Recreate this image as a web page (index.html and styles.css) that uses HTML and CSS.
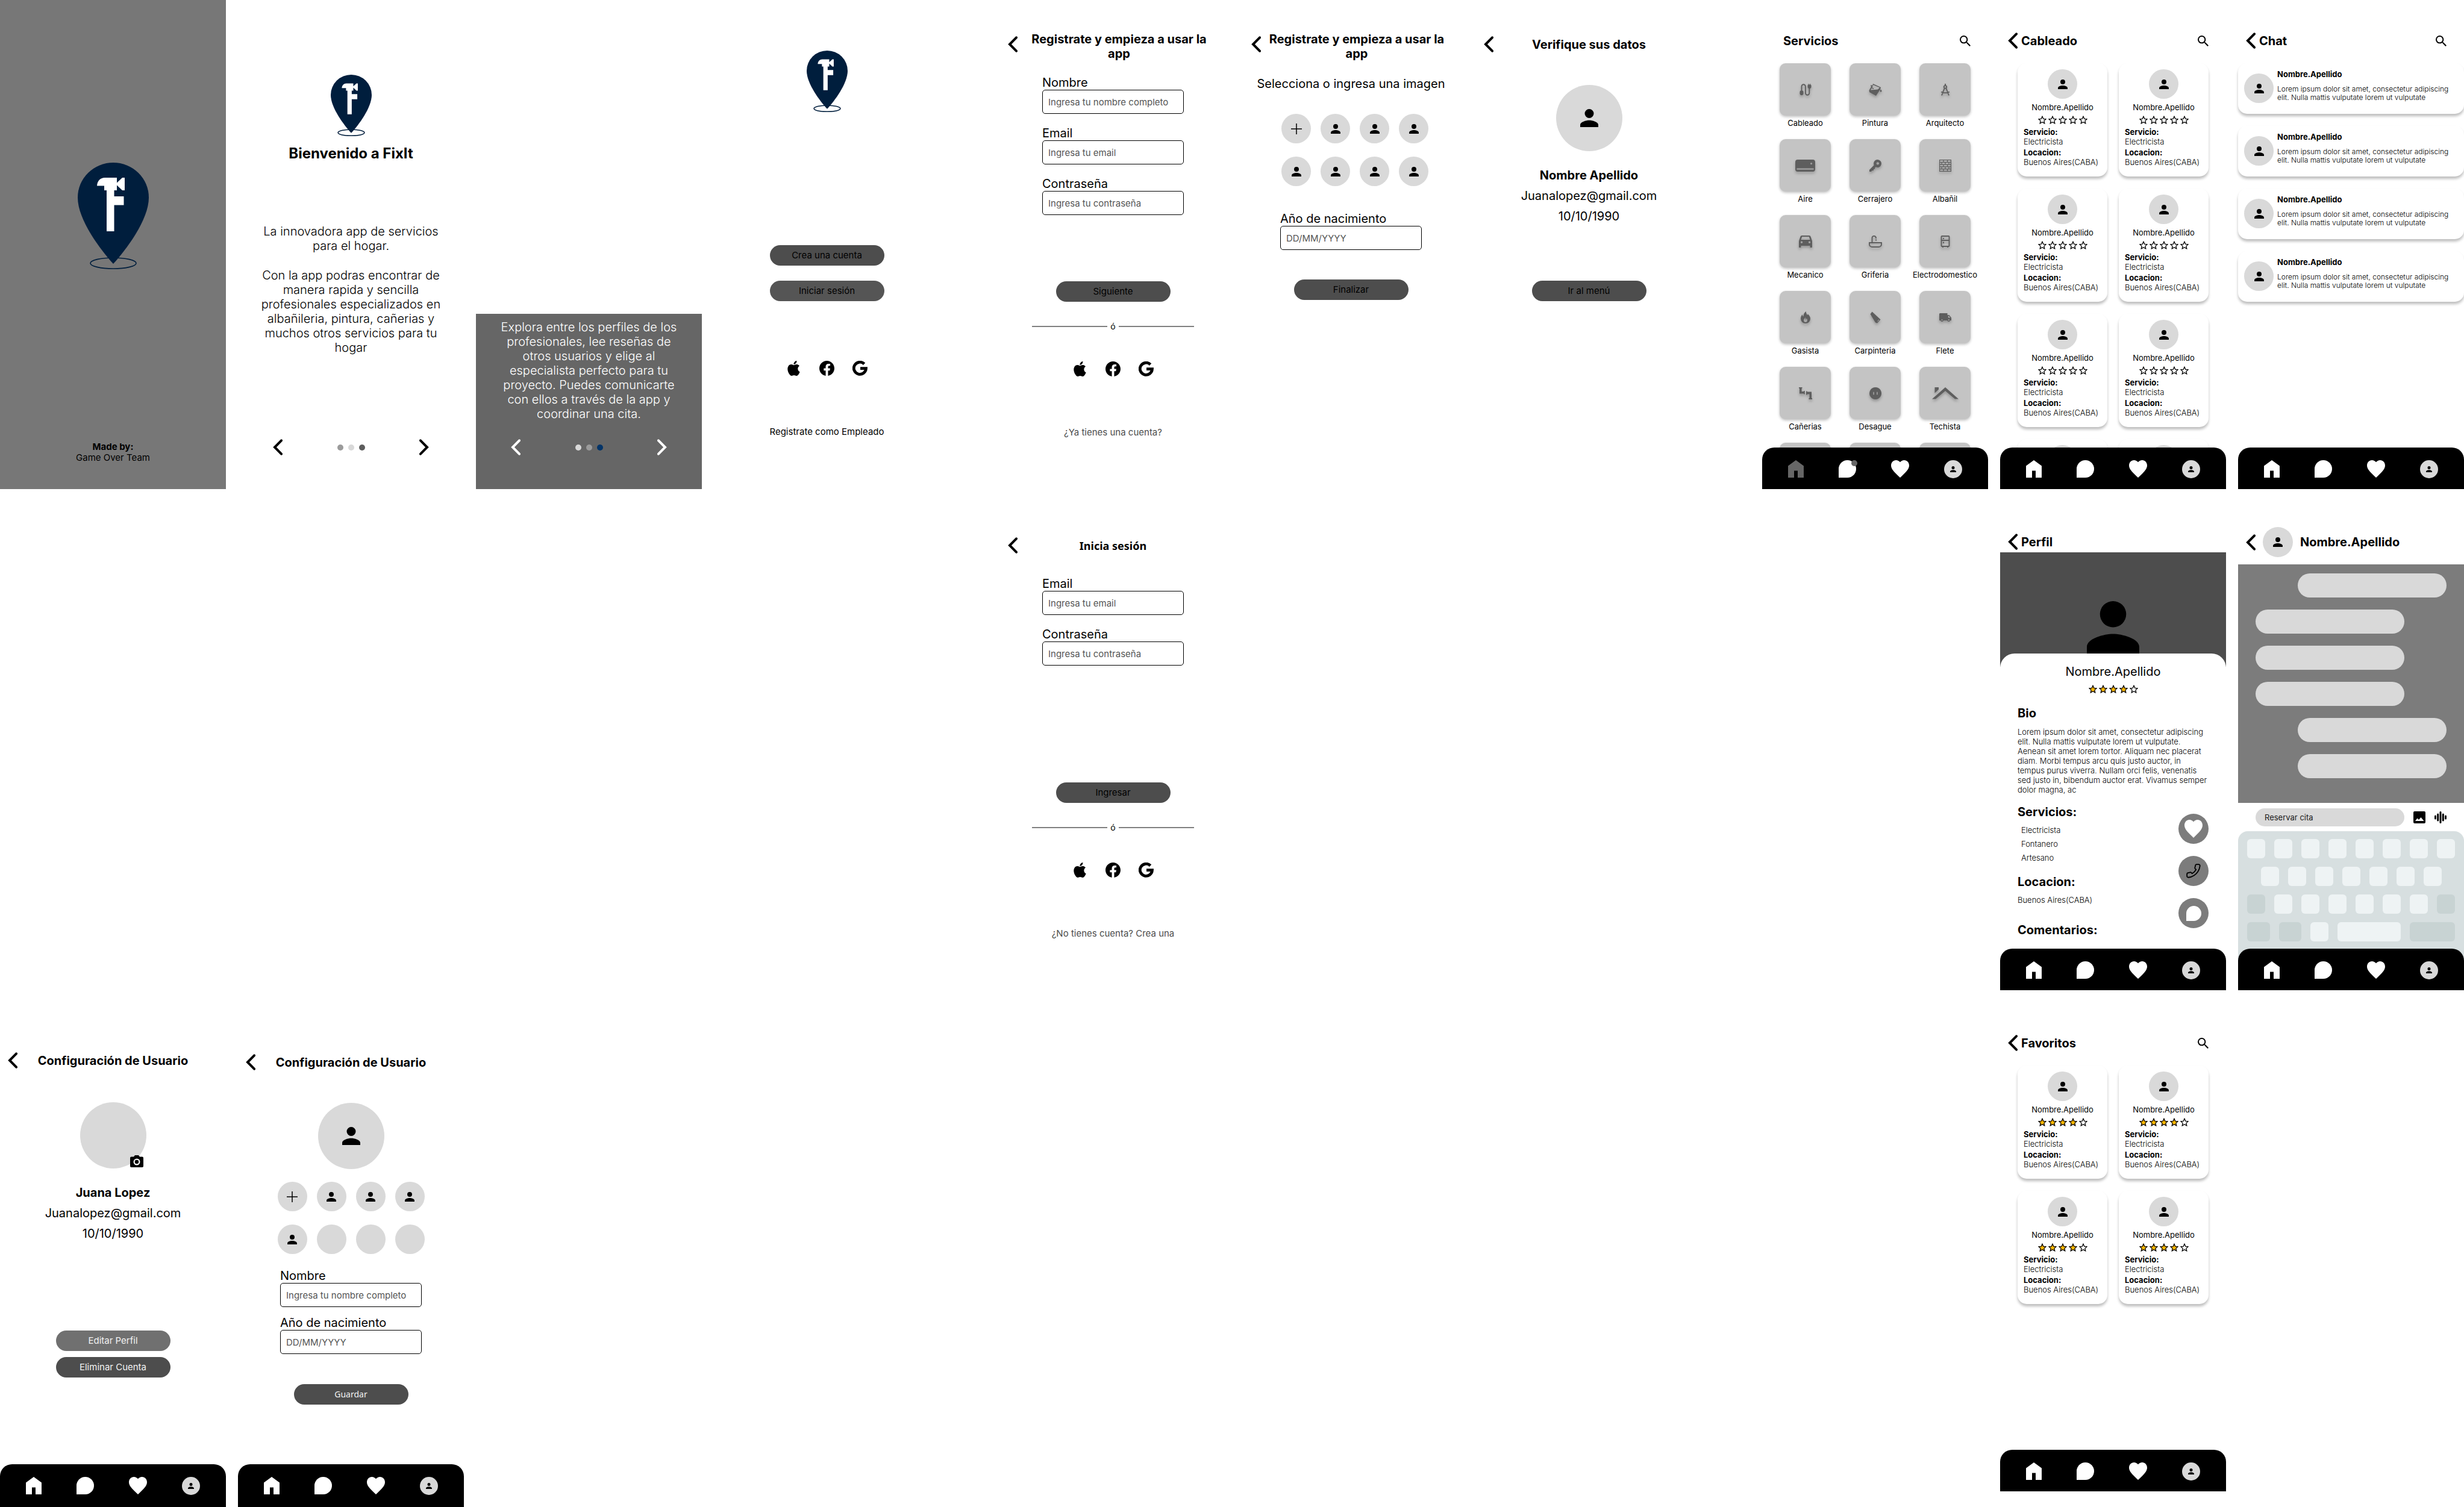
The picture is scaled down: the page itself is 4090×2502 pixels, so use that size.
FILE: index.html
```html
<!DOCTYPE html>
<html lang="es">
<head>
<meta charset="utf-8">
<meta name="viewport" content="width=device-width, initial-scale=1">
<title>FixIt</title>
<link rel="stylesheet" href="styles.css">
</head>
<body>
<svg class="sprite" aria-hidden="true">
  <symbol id="logo" viewBox="0 0 118 177">
    <ellipse cx="59" cy="167" rx="38" ry="9" fill="none" stroke="#001e3d" stroke-width="1.6" vector-effect="non-scaling-stroke"/>
    <path fill="#001e3d" d="M59 168C38 145 0 95 0 58a59 58 0 0 1 118 0c0 37-38 87-59 110z"/>
    <path fill="#fff" d="M32 38.500C32.500 30 38 25 45 25H65V33.500L74 25h4v21h-4l-9-8.500V46h-4.500v10h16v14.500h-16V114H48V46h-4v-7.500z"/>
  </symbol>
  <symbol id="back" viewBox="0 0 16 27"><path d="M14 2.300 3 13.500l11 11.200" fill="none" stroke="currentColor" stroke-width="4" stroke-linecap="round"/></symbol>
  <symbol id="next" viewBox="0 0 16 27"><path d="M2 2.300 13 13.500 2 24.700" fill="none" stroke="currentColor" stroke-width="4" stroke-linecap="round"/></symbol>
  <symbol id="person" viewBox="4 4 16 16"><path d="M12 12a4 4 0 1 0 0-8 4 4 0 0 0 0 8zm0 2c-2.670 0-8 1.340-8 4v2h16v-2c0-2.660-5.330-4-8-4z"/></symbol>
  <symbol id="plus" viewBox="0 0 18 18"><path d="M9 0v18M0 9h18" stroke="#000" stroke-width="1.500"/></symbol>
  <symbol id="star" viewBox="1 1 22 22"><path d="M12 3l2.800 6.300 6.700.7-5 4.600 1.400 6.700L12 17.900l-5.900 3.400 1.400-6.700-5-4.600 6.700-.7z" stroke="#000" stroke-width="2"/></symbol>
  <symbol id="search" viewBox="3 3 17.500 17.500"><path d="M15.500 14h-.790l-.280-.270A6.471 6.471 0 0 0 16 9.500 6.500 6.500 0 1 0 9.500 16c1.610 0 3.090-.590 4.230-1.570l.270.280v.790l5 4.990L20.490 19l-4.990-5zm-6 0C7.010 14 5 11.990 5 9.500S7.010 5 9.500 5 14 7.010 14 9.500 11.990 14 9.500 14z"/></symbol>
  <symbol id="home" viewBox="0 0 26 29"><path fill="currentColor" d="M0 9.500 13 0l13 9.500V29H16V17.500h-6V29H0z"/></symbol>
  <symbol id="bubble" viewBox="0 0 29 29"><path fill="#fff" d="M0 29V14.500a14.500 14.500 0 0 1 29 0A14.500 14.500 0 0 1 14.500 29z"/></symbol>
  <symbol id="heart" viewBox="2 3 20 18.350" preserveAspectRatio="none"><path fill="#fff" d="M12 21.350l-1.450-1.320C5.400 15.360 2 12.280 2 8.500 2 5.420 4.420 3 7.500 3c1.740 0 3.410.810 4.500 2.090C13.090 3.810 14.760 3 16.500 3 19.580 3 22 5.420 22 8.500c0 3.780-3.400 6.860-8.550 11.540L12 21.350z"/></symbol>
  <symbol id="apple" viewBox="0 0 24 24"><path d="M12.152 6.896c-.948 0-2.415-1.078-3.960-1.040-2.040.027-3.910 1.183-4.961 3.014-2.117 3.675-.546 9.103 1.519 12.090 1.013 1.454 2.208 3.090 3.792 3.039 1.520-.065 2.090-.987 3.935-.987 1.831 0 2.350.987 3.960.948 1.637-.026 2.676-1.480 3.676-2.948 1.156-1.688 1.636-3.325 1.662-3.415-.039-.013-3.182-1.221-3.220-4.857-.026-3.040 2.480-4.494 2.597-4.559-1.429-2.090-3.623-2.324-4.390-2.376-2-.156-3.675 1.090-4.610 1.090zM15.530 3.830c.843-1.012 1.400-2.427 1.245-3.830-1.207.052-2.662.805-3.532 1.818-.780.896-1.454 2.338-1.273 3.714 1.338.104 2.715-.688 3.559-1.701"/></symbol>
  <symbol id="facebook" viewBox="0 0 24 24"><path d="M24 12.073c0-6.627-5.373-12-12-12s-12 5.373-12 12c0 5.990 4.388 10.954 10.125 11.854v-8.385H7.078v-3.470h3.047V9.430c0-3.007 1.792-4.669 4.533-4.669 1.312 0 2.686.235 2.686.235v2.953H15.830c-1.491 0-1.956.925-1.956 1.874v2.250h3.328l-.532 3.470h-2.796v8.385C19.612 23.027 24 18.062 24 12.073z"/></symbol>
  <symbol id="google" viewBox="0 0 24 24"><path d="M18.800 5A9.700 9.700 0 1 0 21.600 12.200H12.500" fill="none" stroke="#000" stroke-width="4.600"/></symbol>
  <symbol id="camera" viewBox="0 0 22 20"><path fill-rule="evenodd" d="M2 2.500h4L8 0h6l2 2.500h4a2 2 0 0 1 2 2V18a2 2 0 0 1-2 2H2a2 2 0 0 1-2-2V4.500a2 2 0 0 1 2-2zM11 5.500a5.500 5.500 0 1 0 0 11 5.500 5.500 0 0 0 0-11zm0 2.200a3.300 3.300 0 1 1 0 6.600 3.300 3.300 0 0 1 0-6.600z"/></symbol>
  <symbol id="phone" viewBox="0 0 24 24"><path transform="matrix(-1 0 0 1 24 0)" fill="none" stroke="#000" stroke-width="1.700" stroke-linejoin="round" d="M22 16.920v3a2 2 0 0 1-2.180 2 19.790 19.790 0 0 1-8.630-3.070 19.500 19.500 0 0 1-6-6 19.790 19.790 0 0 1-3.070-8.670A2 2 0 0 1 4.110 2h3a2 2 0 0 1 2 1.720c.127.960.361 1.903.7 2.810a2 2 0 0 1-.450 2.110L8.090 9.910a16 16 0 0 0 6 6l1.270-1.270a2 2 0 0 1 2.110-.450c.907.339 1.850.573 2.810.7A2 2 0 0 1 22 16.920z"/></symbol>
  <symbol id="image" viewBox="0 0 20 20"><path fill-rule="evenodd" d="M2 0h16a2 2 0 0 1 2 2v16a2 2 0 0 1-2 2H2a2 2 0 0 1-2-2V2a2 2 0 0 1 2-2zm1 16h14.500L12.500 10l-3.500 4-2.500-2.500z"/></symbol>
  <symbol id="wave" viewBox="0 0 20 20"><path d="M1.500 8v4M5.700 5v10M10 1.500v17M14.300 5v10M18.500 8v4" stroke="#000" stroke-width="3" stroke-linecap="round"/></symbol>

  <symbol id="s-cable" viewBox="0 0 20 20"><path d="M3.500 13V4.500a3.200 3.200 0 0 1 6.400 0v11a3.200 3.200 0 0 0 6.400 0V7" fill="none" stroke="currentColor" stroke-width="1.900"/><path fill="currentColor" d="M1.500 11.500h4l1 1.500v4l-1.500 2H2l-1.500-2v-4zM14.500 0h1v1.500h1.800V0h1v1.500l1.200 1V6l-1.500 2h-3L13.500 6V2.500l1-1z"/></symbol>
  <symbol id="s-paint" viewBox="0 0 22 20"><path fill="currentColor" fill-rule="evenodd" d="M7 0l13 6-1 3.500L12 20 1 14l-.5-3L4 5 3 3.200 4 2l2 1.200zM7.500 2l-2 4 3 2-.8 1-2.800-1.800L3 10.500l12-1 3-3zM20 9.500c2 2 2 4 0 4s-2-2 0-4z"/></symbol>
  <symbol id="s-compass" viewBox="0 0 20 20"><path fill="none" stroke="currentColor" stroke-width="1.900" d="M10 0v3M10 3a2.300 2.300 0 1 1-.1 0zM8.800 7 4 19.500M11.200 7 16 19.500M3 13.500c4 2 10 2 14 0"/></symbol>
  <symbol id="s-air" viewBox="0 0 33 20"><path fill="currentColor" fill-rule="evenodd" d="M4 0h25a4 4 0 0 1 4 4v12a4 4 0 0 1-4 4H4a4 4 0 0 1-4-4V4a4 4 0 0 1 4-4zm22.500 5a1.600 1.600 0 1 0 .1 0zM3.500 14.200a1 1 0 0 0 0 2.600h26a1 1 0 0 0 0-2.600z"/></symbol>
  <symbol id="s-key" viewBox="0 0 20 20"><path fill="currentColor" fill-rule="evenodd" d="M13.500 0a6.500 6.500 0 1 1-3 12.300L9 14l.5 1.500L7 16v2l-2.500.3L3 20H0v-3l7.700-7.700A6.500 6.500 0 0 1 13.500 0zm.3 4.200a2.200 2.200 0 1 0 .1 0z"/></symbol>
  <symbol id="s-wall" viewBox="0 0 20 20"><path fill="none" stroke="currentColor" stroke-width="1.200" d="M.6.600h18.800v18.800H.6zM.6 4.400h18.800M.6 8.200h18.800M.6 11.900h18.800M.6 15.600h18.800M7 .6v3.800M13.500.6v3.800M4 4.400v3.800M10 4.400v3.800M16 4.400v3.800M7 8.200v3.700M13.500 8.200v3.700M4 11.900v3.700M10 11.900v3.700M16 11.900v3.700M7 15.600v3.800M13.500 15.600v3.800"/></symbol>
  <symbol id="s-car" viewBox="0 0 22 20"><path fill="currentColor" fill-rule="evenodd" d="M5 0h12c1.500 0 2.200.8 2.600 2L22 9v10c0 .6-.4 1-1 1h-1.500c-.6 0-1-.4-1-1v-2h-15v2c0 .6-.4 1-1 1H1c-.6 0-1-.4-1-1V9l2.400-7C2.800.8 3.500 0 5 0zm.2 2L3.500 7h15l-1.700-5zM4.500 9.500a1.700 1.700 0 1 0 .1 0zm13 0a1.700 1.700 0 1 0 .1 0z"/></symbol>
  <symbol id="s-tap" viewBox="0 0 22 20"><path fill="none" stroke="currentColor" stroke-width="1.900" d="M1 12h20v2.500a4.500 4.500 0 0 1-4.500 4.500h-11A4.500 4.500 0 0 1 1 14.500zM5.500 12V4a3.200 3.200 0 0 1 6.400 0v1M12 6.500v2"/></symbol>
  <symbol id="s-fridge" viewBox="0 0 20 20"><path fill="none" stroke="currentColor" stroke-width="1.900" d="M4.500 1h11a1 1 0 0 1 1 1v15a1 1 0 0 1-1 1h-11a1 1 0 0 1-1-1V2a1 1 0 0 1 1-1zM3.500 8h13M7 4v2M7 10.500v2.500M6 18v2M14 18v2"/></symbol>
  <symbol id="s-fire" viewBox="0 0 20 20"><path fill="currentColor" fill-rule="evenodd" d="M11 0c-.5 3 1.500 4 1.500 6 1 0 1-1 1-1.800C16 6 18 9 18 12a8 8 0 0 1-16 0c0-3.500 1.500-5.500 3-7 0 2 .3 3 1.300 3.500C6.500 5 8 1.500 11 0zM9.500 9c.5 2.500-2.500 3-2.500 5.500a3 3 0 0 0 6 .5c.3-2-1-2.500-1.200-4L10.500 14z"/></symbol>
  <symbol id="s-saw" viewBox="0 0 20 20"><path fill="currentColor" fill-rule="evenodd" d="M4.500.5 18.500 13.500 13 19.500l-3-1L1.500 4.500zM15.500 13.500l-2.500 3 .8.6 2.500-3z"/></symbol>
  <symbol id="s-truck" viewBox="0 0 20 20"><path fill="currentColor" fill-rule="evenodd" d="M1 3h12.500v3H16.500L20 10.500V15h-1.800a2.600 2.600 0 0 1-5 0H7a2.600 2.600 0 0 1-5 0H0V4zM14.800 7.500v3h3.400l-2.300-3zM4.500 13a1.200 1.200 0 1 0 .1 0zm11.200 0a1.200 1.200 0 1 0 .1 0z"/></symbol>
  <symbol id="s-pipe" viewBox="0 0 22 20"><path fill="currentColor" d="M0 0h5.500v1.800H4.600V7H8V6h1.800v5.500H8v-1H1V1.800H0zM12 6.500h1.800v1H21V18h1v2h-5.500v-2h1v-6.500h-3.700v1H12z"/></symbol>
  <symbol id="s-outlet" viewBox="0 0 20 20"><path fill="currentColor" fill-rule="evenodd" d="M10 0a10 10 0 1 0 .1 0zM6.200 7.800h1.800v4.500H6.200zm5.800 0h1.800v4.500H12z"/></symbol>
  <symbol id="s-roof" viewBox="0 0 44 20"><path fill="currentColor" d="M22 0l22 19.500h-6L22 6 6 19.500H0zM4.500 0H11v3.500l-6.500 6z"/></symbol>

  <symbol id="stars0" viewBox="0 0 82 14"><g fill="none"><use href="#star" width="14" height="14"/><use href="#star" x="17" width="14" height="14"/><use href="#star" x="34" width="14" height="14"/><use href="#star" x="51" width="14" height="14"/><use href="#star" x="68" width="14" height="14"/></g></symbol>
  <symbol id="stars4" viewBox="0 0 82 14"><g fill="#ffb800"><use href="#star" width="14" height="14"/><use href="#star" x="17" width="14" height="14"/><use href="#star" x="34" width="14" height="14"/><use href="#star" x="51" width="14" height="14"/></g><use href="#star" x="68" width="14" height="14" fill="none"/></symbol>
</svg>

<main class="board">

  <section class="screen splash">
    <svg class="logo logo--large" role="img" aria-label="FixIt"><use href="#logo"/></svg>
    <p class="credit"><strong>Made by:</strong><br>Game Over Team</p>
  </section>

  <section class="screen welcome">
    <svg class="logo" role="img" aria-label="FixIt"><use href="#logo"/></svg>
    <h1 class="welcome__title">Bienvenido a FixIt</h1>
    <div class="intro">
      <p>La innovadora app de servicios para el hogar.</p>
      <p>Con la app podras encontrar de manera rapida y sencilla profesionales especializados en albañileria, pintura, cañerias y muchos otros servicios para tu hogar</p>
    </div>
    <div class="pager">
      <button class="icon-btn" aria-label="Anterior"><svg class="arrow"><use href="#back"/></svg></button>
      <span class="dots"><i class="dot dot--mid"></i><i class="dot"></i><i class="dot dot--dark"></i></span>
      <button class="icon-btn" aria-label="Siguiente"><svg class="arrow"><use href="#next"/></svg></button>
    </div>
  </section>

  <section class="screen tour">
    <div class="tour__panel">
      <p class="intro">Explora entre los perfiles de los profesionales, lee reseñas de otros usuarios y elige al especialista perfecto para tu proyecto. Puedes comunicarte con ellos a través de la app y coordinar una cita.</p>
      <div class="pager">
        <button class="icon-btn" aria-label="Anterior"><svg class="arrow"><use href="#back"/></svg></button>
        <span class="dots"><i class="dot"></i><i class="dot dot--mid"></i><i class="dot dot--blue"></i></span>
        <button class="icon-btn" aria-label="Siguiente"><svg class="arrow"><use href="#next"/></svg></button>
      </div>
    </div>
  </section>

  <section class="screen start">
    <svg class="logo" role="img" aria-label="FixIt"><use href="#logo"/></svg>
    <div class="start__actions">
      <button class="btn">Crea una cuenta</button>
      <button class="btn btn--soft">Iniciar sesión</button>
    </div>
    <div class="social">
      <a href="#" aria-label="Apple"><svg><use href="#apple"/></svg></a>
      <a href="#" aria-label="Facebook"><svg><use href="#facebook"/></svg></a>
      <a href="#" aria-label="Google"><svg><use href="#google"/></svg></a>
    </div>
    <a class="foot-link foot-link--strong" href="#">Registrate como Empleado</a>
  </section>

  <section class="screen signup">
    <header class="head head--long">
      <button class="icon-btn" aria-label="Volver"><svg class="arrow"><use href="#back"/></svg></button>
      <h2>Registrate y empieza a usar la app</h2>
    </header>
    <form class="form">
      <div class="field"><label for="su-name">Nombre</label><input id="su-name" type="text" placeholder="Ingresa tu nombre completo"></div>
      <div class="field"><label for="su-mail">Email</label><input id="su-mail" type="email" placeholder="Ingresa tu email"></div>
      <div class="field"><label for="su-pass">Contraseña</label><input id="su-pass" type="password" placeholder="Ingresa tu contraseña"></div>
    </form>
    <button class="btn">Siguiente</button>
    <p class="or">ó</p>
    <div class="social">
      <a href="#" aria-label="Apple"><svg><use href="#apple"/></svg></a>
      <a href="#" aria-label="Facebook"><svg><use href="#facebook"/></svg></a>
      <a href="#" aria-label="Google"><svg><use href="#google"/></svg></a>
    </div>
    <a class="foot-link" href="#">¿Ya tienes una cuenta?</a>
  </section>

  <section class="screen photo">
    <header class="head head--long">
      <button class="icon-btn" aria-label="Volver"><svg class="arrow"><use href="#back"/></svg></button>
      <h2>Registrate y empieza a usar la app</h2>
    </header>
    <p class="photo__hint">Selecciona o ingresa una imagen</p>
    <div class="picker">
      <button class="avatar" aria-label="Agregar imagen"><svg class="plus"><use href="#plus"/></svg></button>
      <button class="avatar" aria-label="Imagen 1"><svg><use href="#person"/></svg></button>
      <button class="avatar" aria-label="Imagen 2"><svg><use href="#person"/></svg></button>
      <button class="avatar" aria-label="Imagen 3"><svg><use href="#person"/></svg></button>
      <button class="avatar" aria-label="Imagen 4"><svg><use href="#person"/></svg></button>
      <button class="avatar" aria-label="Imagen 5"><svg><use href="#person"/></svg></button>
      <button class="avatar" aria-label="Imagen 6"><svg><use href="#person"/></svg></button>
      <button class="avatar" aria-label="Imagen 7"><svg><use href="#person"/></svg></button>
    </div>
    <form class="form">
      <div class="field"><label for="ph-date">Año de nacimiento</label><input id="ph-date" type="text" placeholder="DD/MM/YYYY"></div>
    </form>
    <button class="btn">Finalizar</button>
  </section>

  <section class="screen verify">
    <header class="head">
      <button class="icon-btn" aria-label="Volver"><svg class="arrow"><use href="#back"/></svg></button>
      <h2>Verifique sus datos</h2>
    </header>
    <div class="avatar avatar--large"><svg><use href="#person"/></svg></div>
    <div class="identity">
      <strong>Nombre Apellido</strong>
      <span>Juanalopez@gmail.com</span>
      <span>10/10/1990</span>
    </div>
    <button class="btn">Ir al menú</button>
  </section>

  <section class="screen services">
    <header class="bar bar--root">
      <h2>Servicios</h2>
      <button class="icon-btn bar__search" aria-label="Buscar"><svg><use href="#search"/></svg></button>
    </header>
    <div class="scroll">
      <ul class="tiles">
        <li><a href="#"><span class="tile"><svg width="20" height="20"><use href="#s-cable"/></svg></span>Cableado</a></li>
        <li><a href="#"><span class="tile"><svg width="22" height="20"><use href="#s-paint"/></svg></span>Pintura</a></li>
        <li><a href="#"><span class="tile"><svg width="20" height="20"><use href="#s-compass"/></svg></span>Arquitecto</a></li>
        <li><a href="#"><span class="tile"><svg width="33" height="20"><use href="#s-air"/></svg></span>Aire</a></li>
        <li><a href="#"><span class="tile"><svg width="20" height="20"><use href="#s-key"/></svg></span>Cerrajero</a></li>
        <li><a href="#"><span class="tile"><svg width="20" height="20"><use href="#s-wall"/></svg></span>Albañil</a></li>
        <li><a href="#"><span class="tile"><svg width="22" height="20"><use href="#s-car"/></svg></span>Mecanico</a></li>
        <li><a href="#"><span class="tile"><svg width="22" height="20"><use href="#s-tap"/></svg></span>Griferia</a></li>
        <li><a href="#"><span class="tile"><svg width="20" height="20"><use href="#s-fridge"/></svg></span>Electrodomestico</a></li>
        <li><a href="#"><span class="tile"><svg width="20" height="20"><use href="#s-fire"/></svg></span>Gasista</a></li>
        <li><a href="#"><span class="tile"><svg width="20" height="20"><use href="#s-saw"/></svg></span>Carpinteria</a></li>
        <li><a href="#"><span class="tile"><svg width="20" height="20"><use href="#s-truck"/></svg></span>Flete</a></li>
        <li><a href="#"><span class="tile"><svg width="22" height="20"><use href="#s-pipe"/></svg></span>Cañerias</a></li>
        <li><a href="#"><span class="tile"><svg width="20" height="20"><use href="#s-outlet"/></svg></span>Desague</a></li>
        <li><a href="#"><span class="tile"><svg width="44" height="20"><use href="#s-roof"/></svg></span>Techista</a></li>
        <li><span class="tile"></span></li>
        <li><span class="tile"></span></li>
        <li><span class="tile"></span></li>
      </ul>
    </div>
    <nav class="tabs">
      <a class="tab tab--home is-active" href="#" aria-label="Inicio"><svg><use href="#home"/></svg></a>
      <a class="tab tab--chat" href="#" aria-label="Chat"><svg><use href="#bubble"/></svg><i class="badge"></i></a>
      <a class="tab" href="#" aria-label="Favoritos"><svg><use href="#heart"/></svg></a>
      <a class="tab avatar" href="#" aria-label="Cuenta"><svg><use href="#person"/></svg></a>
    </nav>
  </section>

  <section class="screen workers">
    <header class="bar">
      <button class="icon-btn" aria-label="Volver"><svg class="arrow"><use href="#back"/></svg></button>
      <h2>Cableado</h2>
      <button class="icon-btn bar__search" aria-label="Buscar"><svg><use href="#search"/></svg></button>
    </header>
    <div class="scroll">
      <div class="cards">
        <article class="card"><div class="avatar"><svg><use href="#person"/></svg></div><h3>Nombre.Apellido</h3><svg class="stars"><use href="#stars0"/></svg><dl><dt>Servicio:</dt><dd>Electricista</dd><dt>Locacion:</dt><dd>Buenos Aires(CABA)</dd></dl></article>
        <article class="card"><div class="avatar"><svg><use href="#person"/></svg></div><h3>Nombre.Apellido</h3><svg class="stars"><use href="#stars0"/></svg><dl><dt>Servicio:</dt><dd>Electricista</dd><dt>Locacion:</dt><dd>Buenos Aires(CABA)</dd></dl></article>
        <article class="card"><div class="avatar"><svg><use href="#person"/></svg></div><h3>Nombre.Apellido</h3><svg class="stars"><use href="#stars0"/></svg><dl><dt>Servicio:</dt><dd>Electricista</dd><dt>Locacion:</dt><dd>Buenos Aires(CABA)</dd></dl></article>
        <article class="card"><div class="avatar"><svg><use href="#person"/></svg></div><h3>Nombre.Apellido</h3><svg class="stars"><use href="#stars0"/></svg><dl><dt>Servicio:</dt><dd>Electricista</dd><dt>Locacion:</dt><dd>Buenos Aires(CABA)</dd></dl></article>
        <article class="card"><div class="avatar"><svg><use href="#person"/></svg></div><h3>Nombre.Apellido</h3><svg class="stars"><use href="#stars0"/></svg><dl><dt>Servicio:</dt><dd>Electricista</dd><dt>Locacion:</dt><dd>Buenos Aires(CABA)</dd></dl></article>
        <article class="card"><div class="avatar"><svg><use href="#person"/></svg></div><h3>Nombre.Apellido</h3><svg class="stars"><use href="#stars0"/></svg><dl><dt>Servicio:</dt><dd>Electricista</dd><dt>Locacion:</dt><dd>Buenos Aires(CABA)</dd></dl></article>
        <article class="card"><div class="avatar"></div></article>
        <article class="card"><div class="avatar"></div></article>
      </div>
    </div>
    <nav class="tabs">
      <a class="tab tab--home" href="#" aria-label="Inicio"><svg><use href="#home"/></svg></a>
      <a class="tab tab--chat" href="#" aria-label="Chat"><svg><use href="#bubble"/></svg></a>
      <a class="tab" href="#" aria-label="Favoritos"><svg><use href="#heart"/></svg></a>
      <a class="tab avatar" href="#" aria-label="Cuenta"><svg><use href="#person"/></svg></a>
    </nav>
  </section>

  <section class="screen chats">
    <header class="bar">
      <button class="icon-btn" aria-label="Volver"><svg class="arrow"><use href="#back"/></svg></button>
      <h2>Chat</h2>
      <button class="icon-btn bar__search" aria-label="Buscar"><svg><use href="#search"/></svg></button>
    </header>
    <ul class="threads">
      <li class="thread"><div class="avatar"><svg><use href="#person"/></svg></div><div><h3>Nombre.Apellido</h3><p>Lorem ipsum dolor sit amet, consectetur adipiscing elit. Nulla mattis vulputate lorem ut vulputate</p></div></li>
      <li class="thread"><div class="avatar"><svg><use href="#person"/></svg></div><div><h3>Nombre.Apellido</h3><p>Lorem ipsum dolor sit amet, consectetur adipiscing elit. Nulla mattis vulputate lorem ut vulputate</p></div></li>
      <li class="thread"><div class="avatar"><svg><use href="#person"/></svg></div><div><h3>Nombre.Apellido</h3><p>Lorem ipsum dolor sit amet, consectetur adipiscing elit. Nulla mattis vulputate lorem ut vulputate</p></div></li>
      <li class="thread"><div class="avatar"><svg><use href="#person"/></svg></div><div><h3>Nombre.Apellido</h3><p>Lorem ipsum dolor sit amet, consectetur adipiscing elit. Nulla mattis vulputate lorem ut vulputate</p></div></li>
    </ul>
    <nav class="tabs">
      <a class="tab tab--home" href="#" aria-label="Inicio"><svg><use href="#home"/></svg></a>
      <a class="tab tab--chat" href="#" aria-label="Chat"><svg><use href="#bubble"/></svg></a>
      <a class="tab" href="#" aria-label="Favoritos"><svg><use href="#heart"/></svg></a>
      <a class="tab avatar" href="#" aria-label="Cuenta"><svg><use href="#person"/></svg></a>
    </nav>
  </section>

  <section class="screen login">
    <header class="head">
      <button class="icon-btn" aria-label="Volver"><svg class="arrow"><use href="#back"/></svg></button>
      <h2>Inicia sesión</h2>
    </header>
    <form class="form">
      <div class="field"><label for="li-mail">Email</label><input id="li-mail" type="email" placeholder="Ingresa tu email"></div>
      <div class="field"><label for="li-pass">Contraseña</label><input id="li-pass" type="password" placeholder="Ingresa tu contraseña"></div>
    </form>
    <button class="btn">Ingresar</button>
    <p class="or">ó</p>
    <div class="social">
      <a href="#" aria-label="Apple"><svg><use href="#apple"/></svg></a>
      <a href="#" aria-label="Facebook"><svg><use href="#facebook"/></svg></a>
      <a href="#" aria-label="Google"><svg><use href="#google"/></svg></a>
    </div>
    <a class="foot-link" href="#">¿No tienes cuenta? Crea una</a>
  </section>

  <section class="screen profile">
    <header class="bar">
      <button class="icon-btn" aria-label="Volver"><svg class="arrow"><use href="#back"/></svg></button>
      <h2>Perfil</h2>
    </header>
    <div class="cover"><svg><use href="#person"/></svg></div>
    <div class="sheet">
      <p class="sheet__name">Nombre.Apellido</p>
      <svg class="stars"><use href="#stars4"/></svg>
      <h3>Bio</h3>
      <p class="bio">Lorem ipsum dolor sit amet, consectetur adipiscing elit. Nulla mattis vulputate lorem ut vulputate. Aenean sit amet lorem tortor. Aliquam nec placerat diam. Morbi tempus arcu quis justo auctor, in tempus purus viverra. Nullam orci felis, venenatis sed justo in, bibendum auctor erat. Vivamus semper dolor magna, ac</p>
      <div class="facts">
        <div>
          <h3>Servicios:</h3>
          <ul><li>Electricista</li><li>Fontanero</li><li>Artesano</li></ul>
          <h3>Locacion:</h3>
          <p>Buenos Aires(CABA)</p>
          <h3>Comentarios:</h3>
        </div>
        <div class="actions">
          <button aria-label="Favorito"><svg width="30" height="30"><use href="#heart"/></svg></button>
          <button aria-label="Llamar"><svg width="26" height="26"><use href="#phone"/></svg></button>
          <button aria-label="Mensaje"><svg width="25" height="25"><use href="#bubble"/></svg></button>
        </div>
      </div>
    </div>
    <nav class="tabs">
      <a class="tab tab--home" href="#" aria-label="Inicio"><svg><use href="#home"/></svg></a>
      <a class="tab tab--chat" href="#" aria-label="Chat"><svg><use href="#bubble"/></svg></a>
      <a class="tab" href="#" aria-label="Favoritos"><svg><use href="#heart"/></svg></a>
      <a class="tab avatar" href="#" aria-label="Cuenta"><svg><use href="#person"/></svg></a>
    </nav>
  </section>

  <section class="screen talk">
    <header class="talk__head">
      <button class="icon-btn" aria-label="Volver"><svg class="arrow"><use href="#back"/></svg></button>
      <div class="avatar"><svg><use href="#person"/></svg></div>
      <h2>Nombre.Apellido</h2>
    </header>
    <div class="messages">
      <span class="msg msg--mine"></span>
      <span class="msg"></span>
      <span class="msg"></span>
      <span class="msg"></span>
      <span class="msg msg--mine"></span>
      <span class="msg msg--mine"></span>
    </div>
    <form class="composer">
      <input type="text" aria-label="Mensaje" placeholder="Reservar cita">
      <button type="button" class="icon-btn" aria-label="Enviar imagen"><svg width="20" height="20"><use href="#image"/></svg></button>
      <button type="button" class="icon-btn" aria-label="Enviar audio"><svg width="20" height="20"><use href="#wave"/></svg></button>
    </form>
    <div class="keyboard" aria-hidden="true">
      <div class="keys"><i></i><i></i><i></i><i></i><i></i><i></i><i></i><i></i></div>
      <div class="keys"><i></i><i></i><i></i><i></i><i></i><i></i><i></i></div>
      <div class="keys"><i class="fn"></i><i></i><i></i><i></i><i></i><i></i><i></i><i class="fn"></i></div>
      <div class="keys keys--bottom"><i class="fn key-5"></i><i class="fn key-5"></i><i class="key-4"></i><i class="key-14"></i><i class="fn key-10"></i></div>
    </div>
    <nav class="tabs">
      <a class="tab tab--home" href="#" aria-label="Inicio"><svg><use href="#home"/></svg></a>
      <a class="tab tab--chat" href="#" aria-label="Chat"><svg><use href="#bubble"/></svg></a>
      <a class="tab" href="#" aria-label="Favoritos"><svg><use href="#heart"/></svg></a>
      <a class="tab avatar" href="#" aria-label="Cuenta"><svg><use href="#person"/></svg></a>
    </nav>
  </section>

  <section class="screen account">
    <header class="head">
      <button class="icon-btn" aria-label="Volver"><svg class="arrow"><use href="#back"/></svg></button>
      <h2>Configuración de Usuario</h2>
    </header>
    <div class="avatar avatar--large"><button class="icon-btn avatar__camera" aria-label="Cambiar foto"><svg width="22" height="20"><use href="#camera"/></svg></button></div>
    <div class="identity">
      <strong>Juana Lopez</strong>
      <span>Juanalopez@gmail.com</span>
      <span>10/10/1990</span>
    </div>
    <div class="account__actions">
      <button class="btn btn--light">Editar Perfil</button>
      <button class="btn btn--dark">Eliminar Cuenta</button>
    </div>
    <nav class="tabs">
      <a class="tab tab--home" href="#" aria-label="Inicio"><svg><use href="#home"/></svg></a>
      <a class="tab tab--chat" href="#" aria-label="Chat"><svg><use href="#bubble"/></svg></a>
      <a class="tab" href="#" aria-label="Favoritos"><svg><use href="#heart"/></svg></a>
      <a class="tab avatar" href="#" aria-label="Cuenta"><svg><use href="#person"/></svg></a>
    </nav>
  </section>

  <section class="screen edit">
    <header class="head">
      <button class="icon-btn" aria-label="Volver"><svg class="arrow"><use href="#back"/></svg></button>
      <h2>Configuración de Usuario</h2>
    </header>
    <div class="avatar avatar--large"><svg><use href="#person"/></svg></div>
    <div class="picker">
      <button class="avatar" aria-label="Agregar imagen"><svg class="plus"><use href="#plus"/></svg></button>
      <button class="avatar" aria-label="Imagen 1"><svg><use href="#person"/></svg></button>
      <button class="avatar" aria-label="Imagen 2"><svg><use href="#person"/></svg></button>
      <button class="avatar" aria-label="Imagen 3"><svg><use href="#person"/></svg></button>
      <button class="avatar" aria-label="Imagen 4"><svg><use href="#person"/></svg></button>
      <button class="avatar" aria-label="Imagen 5"></button>
      <button class="avatar" aria-label="Imagen 6"></button>
      <button class="avatar" aria-label="Imagen 7"></button>
    </div>
    <form class="form">
      <div class="field"><label for="ed-name">Nombre</label><input id="ed-name" type="text" placeholder="Ingresa tu nombre completo"></div>
      <div class="field"><label for="ed-date">Año de nacimiento</label><input id="ed-date" type="text" placeholder="DD/MM/YYYY"></div>
    </form>
    <button class="btn btn--dark btn--save">Guardar</button>
    <nav class="tabs">
      <a class="tab tab--home" href="#" aria-label="Inicio"><svg><use href="#home"/></svg></a>
      <a class="tab tab--chat" href="#" aria-label="Chat"><svg><use href="#bubble"/></svg></a>
      <a class="tab" href="#" aria-label="Favoritos"><svg><use href="#heart"/></svg></a>
      <a class="tab avatar" href="#" aria-label="Cuenta"><svg><use href="#person"/></svg></a>
    </nav>
  </section>

  <section class="screen favorites">
    <header class="bar">
      <button class="icon-btn" aria-label="Volver"><svg class="arrow"><use href="#back"/></svg></button>
      <h2>Favoritos</h2>
      <button class="icon-btn bar__search" aria-label="Buscar"><svg><use href="#search"/></svg></button>
    </header>
    <div class="cards">
      <article class="card"><div class="avatar"><svg><use href="#person"/></svg></div><h3>Nombre.Apellido</h3><svg class="stars"><use href="#stars4"/></svg><dl><dt>Servicio:</dt><dd>Electricista</dd><dt>Locacion:</dt><dd>Buenos Aires(CABA)</dd></dl></article>
      <article class="card"><div class="avatar"><svg><use href="#person"/></svg></div><h3>Nombre.Apellido</h3><svg class="stars"><use href="#stars4"/></svg><dl><dt>Servicio:</dt><dd>Electricista</dd><dt>Locacion:</dt><dd>Buenos Aires(CABA)</dd></dl></article>
      <article class="card"><div class="avatar"><svg><use href="#person"/></svg></div><h3>Nombre.Apellido</h3><svg class="stars"><use href="#stars4"/></svg><dl><dt>Servicio:</dt><dd>Electricista</dd><dt>Locacion:</dt><dd>Buenos Aires(CABA)</dd></dl></article>
      <article class="card"><div class="avatar"><svg><use href="#person"/></svg></div><h3>Nombre.Apellido</h3><svg class="stars"><use href="#stars4"/></svg><dl><dt>Servicio:</dt><dd>Electricista</dd><dt>Locacion:</dt><dd>Buenos Aires(CABA)</dd></dl></article>
    </div>
    <nav class="tabs">
      <a class="tab tab--home" href="#" aria-label="Inicio"><svg><use href="#home"/></svg></a>
      <a class="tab tab--chat" href="#" aria-label="Chat"><svg><use href="#bubble"/></svg></a>
      <a class="tab" href="#" aria-label="Favoritos"><svg><use href="#heart"/></svg></a>
      <a class="tab avatar" href="#" aria-label="Cuenta"><svg><use href="#person"/></svg></a>
    </nav>
  </section>

</main>
</body>
</html>
```
FILE: styles.css
```css
*, *::before, *::after { box-sizing: border-box; }

body {
  margin: 0;
  background: #fff;
  color: #000;
  font-family: Inter, "Liberation Sans", sans-serif;
  font-size: 20px;
  line-height: 24px;
}

h1, h2, h3, p, ul, dl, dd { margin: 0; padding: 0; }
ul { list-style: none; }
h1, h2, h3 { font-size: 20px; font-weight: 700; }
a { color: inherit; text-decoration: none; }
svg { display: block; }
button, input { font: inherit; color: inherit; }
.sprite { position: absolute; width: 0; height: 0; }

/* Board: three groups of screens in three rows */
.board {
  display: grid;
  grid-template-columns: repeat(4, 1fr) 60px repeat(3, 1fr) 60px repeat(3, 1fr);
  grid-template-rows: auto auto 838px;
  gap: 20px;
}
.screen {
  display: flex;
  flex-direction: column;
  align-items: center;
  min-width: 0;
  min-height: 812px;
  background: #fff;
}
.splash { grid-area: 1 / 1; }
.welcome { grid-area: 1 / 2; }
.tour { grid-area: 1 / 3; }
.start { grid-area: 1 / 4; }
.signup { grid-area: 1 / 6; }
.photo { grid-area: 1 / 7; }
.verify { grid-area: 1 / 8; }
.services { grid-area: 1 / 10; }
.workers { grid-area: 1 / 11; }
.chats { grid-area: 1 / 12; }
.login { grid-area: 2 / 6; }
.profile { grid-area: 2 / 11; }
.talk { grid-area: 2 / 12; }
.account { grid-area: 3 / 1; align-self: end; }
.edit { grid-area: 3 / 2; align-self: end; }
.favorites { grid-area: 3 / 11; align-self: start; }

/* Shared controls */
.icon-btn {
  flex: none;
  padding: 0;
  border: 0;
  background: none;
}
.arrow { width: 16px; height: 27px; }
.btn {
  width: 190px;
  height: 34px;
  padding: 0;
  border: 0;
  border-radius: 17px;
  background: #4d4d4d;
  color: #000;
  font-size: 15px;
  line-height: 18px;
}
.btn--soft { background: #555; }
.btn--light { background: #707070; color: #f2f2f2; }
.btn--dark { color: #f2f2f2; }
.btn--save { font-family: "Noto Sans", sans-serif; font-size: 14px; }

.avatar {
  display: flex;
  flex: none;
  align-items: center;
  justify-content: center;
  width: 49px;
  height: 49px;
  padding: 0;
  border: 0;
  border-radius: 50%;
  background: #d9d9d9;
}
.avatar svg { width: 16px; height: 16px; }
.avatar .plus { width: 18px; height: 18px; }
.avatar--large { position: relative; width: 110px; height: 110px; }
.avatar--large svg { width: 30px; height: 30px; }
.avatar__camera { position: absolute; right: 5px; bottom: 2px; }
.avatar .avatar__camera svg { width: 22px; height: 20px; }

.stars { width: 82px; height: 14px; }

.logo { width: 68px; height: 102px; }
.logo--large { width: 118px; height: 177px; }

/* Headers */
.head {
  display: grid;
  grid-template-columns: 16px 1fr 16px;
  align-items: center;
  width: 100%;
  padding: 60px 13px 0;
  text-align: center;
}
.head--long {
  grid-template-columns: 16px 1fr;
  column-gap: 4px;
  align-items: start;
  padding-top: 53px;
}
.head--long .icon-btn { margin-top: 7px; }
.bar {
  display: flex;
  align-items: center;
  gap: 6px;
  width: 100%;
  padding: 54px 29px 24px 13px;
}
.bar--root { min-height: 105px; padding-left: 35px; }
.bar__search { margin-left: auto; }
.bar__search svg { width: 18px; height: 18px; }

/* Bottom tabs */
.tabs {
  position: relative;
  display: flex;
  justify-content: space-between;
  align-items: flex-start;
  width: 100%;
  height: 69px;
  margin-top: auto;
  padding: 21px 43px 0;
  border-radius: 20px 20px 0 0;
  background: #000;
  color: #fff;
}
.tab { position: relative; width: 30px; height: 29px; }
.tab svg { width: 100%; height: 100%; }
.tab--home { width: 26px; }
.tab--chat { width: 29px; }
.tab.avatar { height: 30px; color: #000; }
.tab.avatar svg { width: 10px; height: 10px; }
.tab.is-active { color: #666; }
.badge {
  position: absolute;
  top: 0;
  left: 21px;
  width: 10px;
  height: 10px;
  border-radius: 50%;
  background: #666;
}

/* Splash and welcome */
.splash { padding-top: 270px; background: #777; }
.credit { margin-top: 286px; font-size: 15px; line-height: 18px; text-align: center; }
.welcome { padding-top: 124px; }
.welcome__title { margin-top: 15px; font-size: 24px; line-height: 28px; }
.intro {
  width: 100%;
  padding: 0 34px;
  font-weight: 300;
  text-align: center;
}
.intro p + p { margin-top: 25px; }
.welcome .intro { margin-top: 103px; }
.welcome .pager { margin-top: 140px; }
.pager {
  display: flex;
  justify-content: space-between;
  align-items: center;
  width: 100%;
  padding: 0 58px;
}
.dots { display: flex; gap: 8px; }
.dot { width: 10px; height: 10px; border-radius: 50%; background: #d9d9d9; }
.dot--mid { background: #9b9b9b; }
.dot--dark { background: #5d5d5d; }
.dot--blue { background: #033468; }
.tour__panel {
  width: 100%;
  margin-top: auto;
  padding: 10px 0 56px;
  background: #666;
  color: #fff;
}
.tour .pager { margin-top: 30px; }

/* Start, sign up, log in */
.start { padding-top: 84px; }
.start__actions { display: grid; gap: 25px; margin-top: 221px; }
.social { display: flex; gap: 30px; margin-top: 50px; }
.social svg { width: 25px; height: 25px; }
.start .social { margin-top: 99px; }
.foot-link { margin-top: 84px; color: #4d4d4d; font-size: 15px; line-height: 18px; }
.foot-link--strong { color: #000; }
.form { display: grid; gap: 20px; width: 100%; margin-top: 24px; padding: 0 70px; }
.field { display: grid; }
.field input {
  width: 100%;
  height: 40px;
  padding: 0 9px;
  border: 1px solid #000;
  border-radius: 5px;
  background: #fff;
  font-size: 15px;
  line-height: 18px;
}
.field input::placeholder { color: #555; opacity: 1; }
.signup > .btn { margin-top: 110px; }
.or {
  display: flex;
  align-items: center;
  gap: 5px;
  width: 100%;
  margin-top: 33px;
  padding: 0 53px;
  font-size: 14px;
  line-height: 16px;
}
.or::before, .or::after { content: ""; flex: 1; height: 2px; background: #808080; }
.login .head { font-family: "Noto Sans", sans-serif; }
.login h2 { font-size: 18px; }
.login .form { margin-top: 38px; }
.login > .btn { margin-top: 194px; }

/* Photo choice */
.photo .head { padding-right: 23px; padding-left: 22px; }
.photo__hint { margin-top: 26px; }
.picker { display: grid; grid-template-columns: repeat(4, 49px); gap: 22px 16px; }
.photo .picker { align-self: flex-start; margin: 38px 0 0 72px; }
.photo .form { margin-top: 42px; }
.photo > .btn { margin-top: 49px; }

/* Verification and account */
.verify .avatar--large, .edit .avatar--large { margin-top: 54px; }
.identity { display: grid; gap: 10px; margin-top: 28px; text-align: center; }
.verify > .btn { margin-top: 95px; }
.account .head { padding-top: 57px; }
.account .avatar--large { margin-top: 56px; }
.account__actions { display: grid; gap: 10px; margin-top: 149px; }
.edit .picker { margin-top: 21px; }
.edit .form { gap: 14px; }
.edit > .btn { margin-top: 50px; }
.account .tabs, .edit .tabs { height: 71px; }

/* Services */
.scroll { flex: 1 1 0; width: 100%; min-height: 0; overflow: hidden; }
.tiles {
  display: grid;
  grid-template-columns: repeat(3, 85px);
  justify-content: space-between;
  row-gap: 19px;
  padding: 0 29px;
  font-size: 13px;
  line-height: 16px;
}
.tiles li, .tiles a { display: flex; flex-direction: column; align-items: center; gap: 4px; white-space: nowrap; }
.tile {
  display: flex;
  align-items: center;
  justify-content: center;
  width: 85px;
  height: 87px;
  border-radius: 10px;
  background: #c4c4c4;
  color: #5e5e5e;
  box-shadow: 0 2px 4px rgba(0, 0, 0, .25);
}
.tile svg { filter: drop-shadow(0 3px 2px rgba(0, 0, 0, .25)); }

/* Worker cards */
.cards {
  display: grid;
  grid-template-columns: 1fr 1fr;
  gap: 20px 19px;
  width: 100%;
  padding: 0 29px;
}
.card {
  display: flex;
  flex-direction: column;
  align-items: center;
  min-height: 188px;
  padding: 10px 10px 16px;
  border-radius: 15px;
  background: #fff;
  box-shadow: 0 4px 4px rgba(0, 0, 0, .25);
  font-size: 13px;
  line-height: 16px;
}
.card h3 { margin-top: 6px; font-size: 13px; font-weight: 400; }
.card .stars { margin-top: 6px; }
.card dl { align-self: stretch; margin-top: 5px; }
.card dt { font-weight: 700; }
.card dd { font-weight: 300; }
.card dd + dt { margin-top: 2px; }

/* Chat list */
.threads { display: grid; gap: 20px; width: 100%; }
.thread {
  display: flex;
  gap: 6px;
  min-height: 84px;
  padding: 10px;
  border-radius: 15px;
  box-shadow: 0 4px 4px rgba(0, 0, 0, .25);
}
.thread .avatar { margin-top: 7px; }
.thread h3 { font-size: 13px; line-height: 16px; }
.thread p { margin-top: 10px; font-size: 12px; font-weight: 300; line-height: 14px; }

/* Profile */
.profile .bar { padding-bottom: 4px; }
.cover {
  display: flex;
  justify-content: center;
  width: 100%;
  height: 190px;
  padding-top: 81px;
  background: #4d4d4d;
}
.cover svg { width: 87px; height: 87px; }
.sheet {
  display: flex;
  flex-direction: column;
  width: 100%;
  margin-top: -22px;
  padding: 18px 29px 0;
  border-radius: 24px 24px 0 0;
  background: #fff;
}
.sheet__name { text-align: center; }
.sheet .stars { align-self: center; margin-top: 10px; }
.sheet .stars + h3 { margin-top: 21px; }
.bio { margin-top: 11px; font-size: 13px; font-weight: 300; line-height: 16px; }
.facts {
  display: flex;
  justify-content: space-between;
  margin-top: 17px;
}
.facts ul { display: grid; gap: 7px; margin: 10px 0 20px 6px; }
.facts li, .facts p { font-size: 13px; font-weight: 300; line-height: 16px; }
.facts p { margin: 10px 0 30px; }
.actions { display: grid; align-content: start; gap: 20px; margin-top: 15px; }
.actions button {
  display: flex;
  align-items: center;
  justify-content: center;
  width: 50px;
  height: 50px;
  padding: 0;
  border: 0;
  border-radius: 50%;
  background: #7c7c7c;
}

/* Conversation */
.talk__head {
  display: flex;
  align-items: center;
  gap: 12px;
  width: 100%;
  padding: 43px 13px 12px;
}
.talk__head .avatar { width: 50px; height: 50px; }
.messages {
  display: flex;
  flex: 1;
  flex-direction: column;
  gap: 20px;
  width: 100%;
  padding: 15px 29px 41px;
  background: #7c7c7c;
}
.msg { width: 78%; height: 40px; border-radius: 20px; background: #d9d9d9; }
.msg--mine { align-self: flex-end; }
.composer {
  display: flex;
  align-items: center;
  gap: 15px;
  width: 100%;
  padding: 9px 29px 8px;
}
.composer input {
  flex: 1;
  min-width: 0;
  height: 30px;
  padding: 0 15px;
  border: 0;
  border-radius: 15px;
  background: #d9d9d9;
  font-size: 13px;
  line-height: 16px;
}
.composer input::placeholder { color: #1a1a1a; opacity: 1; }
.keyboard {
  display: grid;
  gap: 14px;
  width: 100%;
  margin-bottom: -20px;
  padding: 13px 15px 32px;
  border-radius: 16px 16px 0 0;
  background: #d7dfe0;
}
.keys { display: flex; justify-content: center; gap: 15px; }
.keys i { width: 30px; height: 32px; border-radius: 6px; background: #eef3f4; }
.keys .fn { background: #c8d3d3; }
.keys--bottom i { width: 0; }
.keys .key-4 { flex-grow: 4; }
.keys .key-5 { flex-grow: 5; }
.keys .key-10 { flex-grow: 10; }
.keys .key-14 { flex-grow: 14; }
```
